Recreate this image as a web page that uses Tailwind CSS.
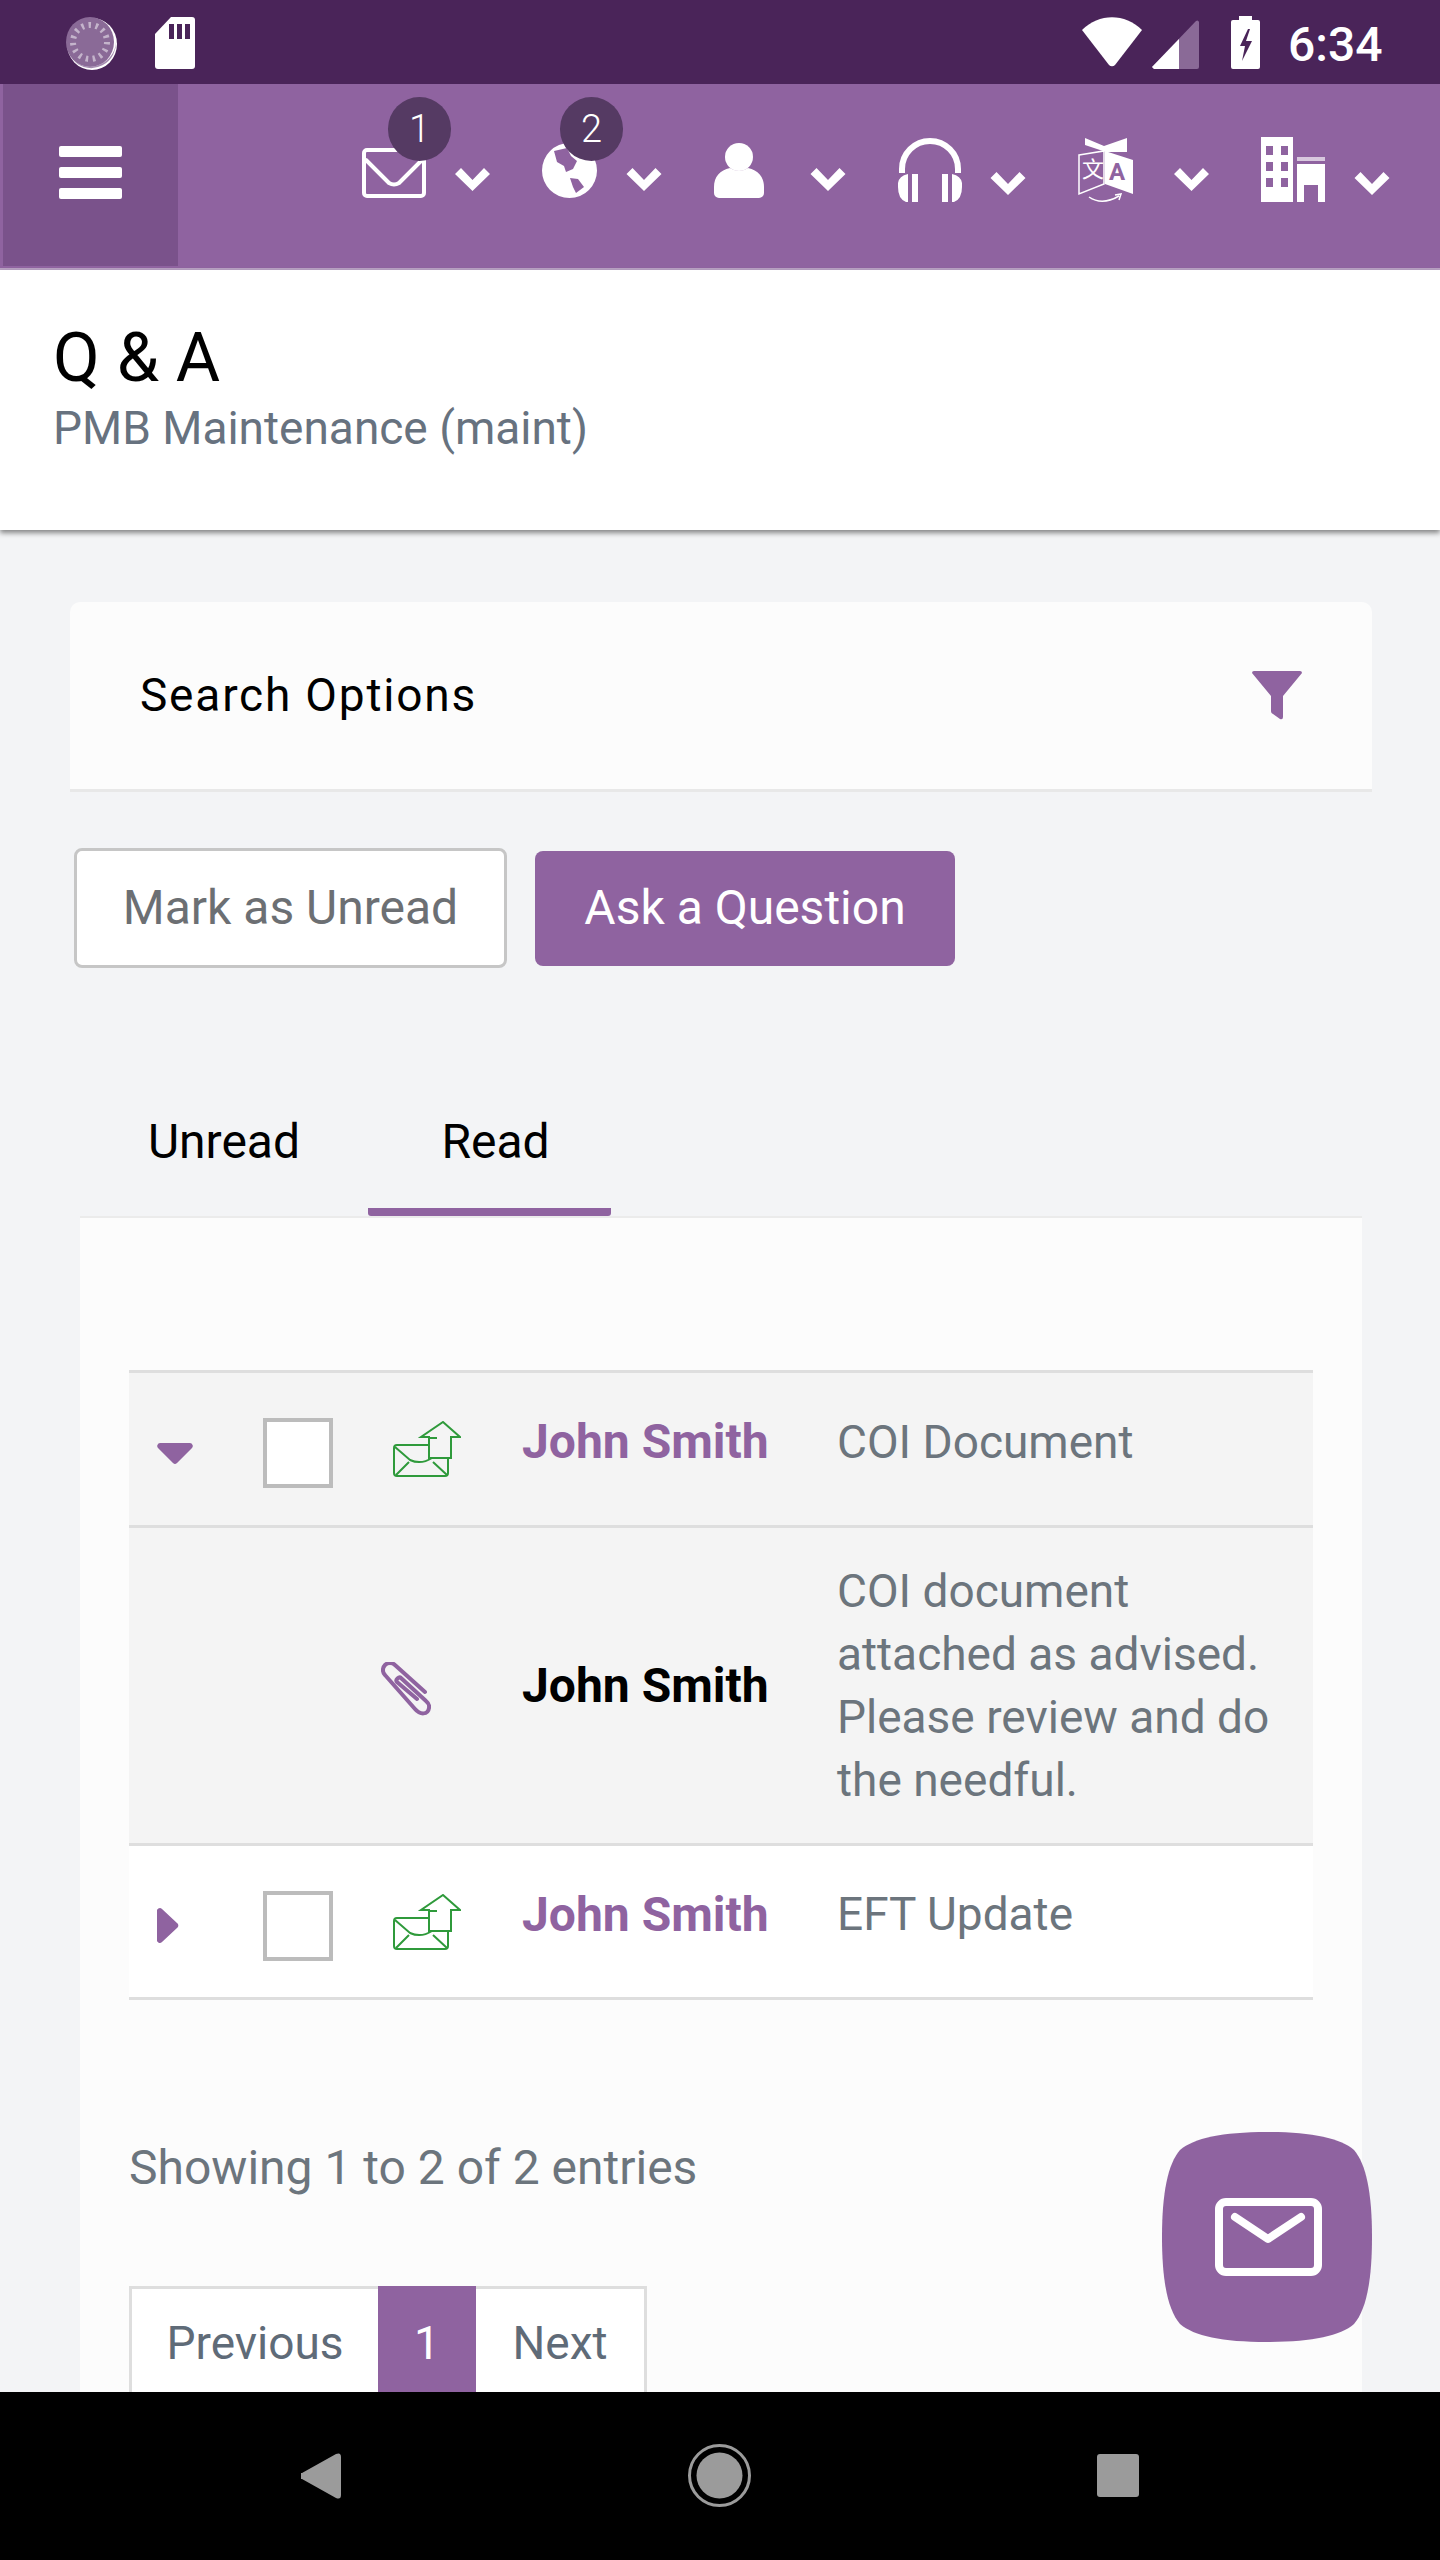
<!DOCTYPE html>
<html lang="en">
<head>
    <meta charset="UTF-8">
    <meta name="viewport" content="width=device-width, initial-scale=1.0">
    <title>Q &amp; A</title>
    <script src="https://cdn.jsdelivr.net/npm/@tailwindcss/browser@4"></script>
</head>
<body class="font-['Roboto',sans-serif]">
<div class="relative w-[1440px] h-[2560px] overflow-hidden flex flex-col bg-[#f3f4f6]">

    <!-- status bar -->
    <div class="relative h-[84px] shrink-0 bg-[#4a2459] flex items-start">
        <svg class="ml-[66px] mt-[17px]" width="51" height="53" viewBox="0 0 51 53">
            <ellipse cx="26" cy="27" rx="25" ry="26" fill="#fff"/>
            <ellipse cx="24" cy="25" rx="24" ry="25" fill="#8a6a97"/>
            <circle cx="24" cy="25" r="17" fill="none" stroke="#c4b4cb" stroke-width="6" stroke-dasharray="2.5 4.6"/>
            <path d="M8 44A25 26 0 0 0 50 22A26 26 0 0 1 8 44Z" fill="#a68db1"/>
        </svg>
        <svg class="ml-[38px] mt-[17px]" width="40" height="52" viewBox="0 0 40 52">
            <path d="M16 0H37a3 3 0 0 1 3 3V49a3 3 0 0 1-3 3H3a3 3 0 0 1-3-3V17Z" fill="#fff"/>
            <path d="M14 7h5v15h-5zM22 7h5v15h-5zM30 7h5v15h-5z" fill="#4a2459"/>
        </svg>
        <svg class="ml-[887px] mt-[17px]" width="60" height="50" viewBox="0 0 60 50">
            <path d="M0 13C17-4 43-4 60 13L33 48a4 4 0 0 1-6 0Z" fill="#fff"/>
        </svg>
        <svg class="ml-[10px] mt-[20px]" width="47" height="49" viewBox="0 0 47 49">
            <path d="M0 47 44 1a2 2 0 0 1 3 1V47a2 2 0 0 1-2 2H2Z" fill="#8a6a97"/>
            <path d="M0 47 27 19V49H2Z" fill="#fff"/>
        </svg>
        <svg class="ml-[32px] mt-[16px]" width="29" height="53" viewBox="0 0 29 53">
            <path d="M8 0H21V4H27a2 2 0 0 1 2 2V51a2 2 0 0 1-2 2H2a2 2 0 0 1-2-2V6a2 2 0 0 1 2-2H8Z" fill="#fff"/>
            <path d="M17 13 9 30h5l-3 15 10-20h-6l4-12Z" fill="#4a2459"/>
        </svg>
        <span class="ml-[28px] mt-[15px] text-[48px] leading-[60px] font-medium text-white">6:34</span>
    </div>

    <!-- purple header -->
    <div class="relative h-[186px] shrink-0 bg-[#8f63a0] border-b-2 border-[#b9a2c4] flex items-start">
        <div class="ml-[3px] w-[175px] h-[182px] bg-[#7a528b] flex items-center justify-center">
            <div class="flex flex-col gap-[10px] -mt-[6px]">
                <div class="w-[63px] h-[11px] rounded-[2px] bg-white"></div>
                <div class="w-[63px] h-[11px] rounded-[2px] bg-white"></div>
                <div class="w-[63px] h-[11px] rounded-[2px] bg-white"></div>
            </div>
        </div>

        <!-- inbox -->
        <div class="relative ml-[184px] mt-[64px]">
            <svg class="block" width="64" height="50" viewBox="0 0 64 50" fill="none" stroke="#fff" stroke-width="4" stroke-linecap="round" stroke-linejoin="round">
                <rect x="2" y="2" width="60" height="46" rx="3"/>
                <path d="M4 12 27 35q5 3 10 0L60 12"/>
            </svg>
            <span class="absolute left-[26px] -top-[51px] w-[63px] h-[64px] rounded-full bg-[#553a63] text-white text-[38px] font-light leading-[64px] text-center">1</span>
        </div>
        <svg class="ml-[29px] mt-[84px]" width="35" height="23" viewBox="0 0 35 23"><path d="M0 6 6 0 17.500 12 29 0 35 6 17.500 23Z" fill="#fff"/></svg>

        <!-- regions -->
        <div class="relative ml-[52px] mt-[59px]">
            <svg class="block" width="55" height="55" viewBox="0 0 55 55">
                <circle cx="27.500" cy="27.500" r="27.500" fill="#fff"/>
                <path d="M12 8 25 5 29 13 35 18 31 26 24 29 22 23 15 19ZM28 35 36 36 42 44 34 50 31 44Z" fill="#8f63a0"/>
            </svg>
            <span class="absolute left-[18px] -top-[46px] w-[63px] h-[64px] rounded-full bg-[#553a63] text-white text-[38px] font-light leading-[64px] text-center">2</span>
        </div>
        <svg class="ml-[29px] mt-[84px]" width="36" height="23" viewBox="0 0 35 23"><path d="M0 6 6 0 17.500 12 29 0 35 6 17.500 23Z" fill="#fff"/></svg>

        <!-- profile -->
        <svg class="ml-[52px] mt-[59px]" width="50" height="55" viewBox="0 0 50 55">
            <ellipse cx="25" cy="14" rx="14" ry="14" fill="#fff"/>
            <path d="M0 44C0 34 6 27 16 25Q25 31 34 25C44 27 50 34 50 44V50a5 5 0 0 1-5 5H5a5 5 0 0 1-5-5Z" fill="#fff"/>
        </svg>
        <svg class="ml-[46px] mt-[84px]" width="36" height="23" viewBox="0 0 35 23"><path d="M0 6 6 0 17.500 12 29 0 35 6 17.500 23Z" fill="#fff"/></svg>

        <!-- support -->
        <svg class="ml-[52px] mt-[53px]" width="64" height="65" viewBox="0 0 64 65">
            <path d="M4 36V32a28 28 0 0 1 56 0V36" fill="none" stroke="#fff" stroke-width="6"/>
            <path d="M10 37V65H8Q0 62 0 50V46Q1 39 10 37ZM14 37h6V65h-6ZM54 37V65h2Q64 62 64 50V46Q63 39 54 37ZM50 37h-6V65h6Z" fill="#fff"/>
        </svg>
        <svg class="ml-[28px] mt-[88px]" width="36" height="23" viewBox="0 0 35 23"><path d="M0 6 6 0 17.500 12 29 0 35 6 17.500 23Z" fill="#fff"/></svg>

        <!-- language -->
        <svg class="ml-[52px] mt-[54px]" width="55" height="67" viewBox="0 0 55 67">
            <path d="M7 0 26 8 49 0V14H28L7 7Z" fill="#fff"/>
            <path d="M1 17 26 13V46L1 56Z" fill="none" stroke="#fff" stroke-width="1.500"/>
            <path d="M27 13 55 22V56L27 46Z" fill="#fff"/>
            <text x="4" y="39" font-size="22" font-family="'Noto Sans CJK SC',sans-serif" fill="#fff">文</text>
            <text x="31" y="42" font-size="24" font-weight="700" font-family="Roboto,sans-serif" fill="#8f63a0">A</text>
            <path d="M11 59Q24 68 41 58M37 57 43 56 41 62" fill="none" stroke="#fff" stroke-width="1.500"/>
        </svg>
        <svg class="ml-[41px] mt-[84px]" width="35" height="23" viewBox="0 0 35 23"><path d="M0 6 6 0 17.500 12 29 0 35 6 17.500 23Z" fill="#fff"/></svg>

        <!-- building -->
        <svg class="ml-[52px] mt-[53px]" width="64" height="65" viewBox="0 0 64 65">
            <path fill-rule="evenodd" d="M0 0H32V65H0ZM5 9V18H12V9ZM20 9V18H27V9ZM5 25V34H12V25ZM20 25V34H27V25ZM5 41V50H12V41ZM20 41V50H27V41Z" fill="#fff"/>
            <path d="M36 20H64V24H36Z" fill="#d8c8de"/>
            <path fill-rule="evenodd" d="M36 27H64V65H57V48H43V65H36Z" fill="#fff"/>
        </svg>
        <svg class="ml-[29px] mt-[88px]" width="36" height="23" viewBox="0 0 35 23"><path d="M0 6 6 0 17.500 12 29 0 35 6 17.500 23Z" fill="#fff"/></svg>
    </div>

    <!-- page title -->
    <div class="relative z-10 h-[260px] shrink-0 bg-white shadow-[0_3px_5px_rgba(0,0,0,0.45)] pl-[53px] pt-[48px]">
        <h1 class="text-[68px] leading-[80px] text-black">Q &amp; A</h1>
        <p class="text-[46px] leading-[56px] mt-[2px] text-[#67727f]">PMB Maintenance (maint)</p>
    </div>

    <!-- content -->
    <div class="flex-1 min-h-0 overflow-hidden pt-[72px] pl-[70px] pr-[68px]">
        <div class="h-[190px] rounded-t-[10px] bg-[#fcfcfc] border-b-[3px] border-[#e8e8e8] flex items-center justify-between pl-[70px] pr-[70px]">
            <span class="text-[46px] tracking-[1.800px] text-black">Search Options</span>
            <svg width="50" height="50" viewBox="0 0 50 50"><path d="M0 2a2 2 0 0 1 2-2H48a2 2 0 0 1 2 2L31 25V46q0 3-3 2L21 43a3 3 0 0 1-2-3V25Z" fill="#8f63a0"/></svg>
        </div>

        <div class="flex items-center gap-[28px] mt-[56px] ml-[4px]">
            <button class="w-[433px] h-[120px] rounded-[8px] border-[3px] border-[#c6c6c6] bg-white text-[48px] text-[#6c6f73]">Mark as Unread</button>
            <button class="w-[420px] h-[115px] rounded-[8px] bg-[#8f63a0] text-[48px] text-white">Ask a Question</button>
        </div>

        <div class="flex h-[248px] items-end ml-[10px] relative">
            <div class="w-[288px] h-[136px] flex items-center justify-center pb-[12px] text-[48px] text-black">Unread</div>
            <div class="w-[243px] h-[136px] flex items-center justify-center pb-[4px] pl-[12px] text-[48px] text-black border-b-[8px] border-[#8f63a0] rounded-b-[3px]">Read</div>
        </div>

        <div class="ml-[10px] mr-[10px] h-[1200px] bg-[#fcfcfc] border-t-2 border-[#ebebeb] px-[49px] pt-[152px]">
            <div class="border-t-[3px] border-[#dedede] h-[155px] bg-[#f4f4f4] flex items-center">
                <div class="w-[134px] pl-[28px] pt-[8px]">
                    <svg class="block" width="36" height="21" viewBox="0 0 36 21"><path d="M3 0H33a3 3 0 0 1 2 5L20 20a3 3 0 0 1-4 0L1 5A3 3 0 0 1 3 0Z" fill="#8f63a0"/></svg>
                </div>
                <div class="w-[130px] pt-[8px]"><div class="w-[70px] h-[70px] border-[4px] border-[#bcbcbc] bg-white"></div></div>
                <div class="w-[129px]">
                    <svg class="block" width="68" height="56" viewBox="0 0 68 56" fill="none" stroke="#2f9a3b" stroke-width="2">
                        <path d="M36 24H4a3 3 0 0 0-3 3V52a3 3 0 0 0 3 3H52a3 3 0 0 0 3-3V38"/>
                        <path d="M2 26 17 39Q28 44 39 37M3 54 16 41M54 54 40 41"/>
                        <path d="M36 37V17H37L44 17H36L36 16 28 16 50 1 67 16H58V37H44Z"/>
                    </svg>
                </div>
                <div class="w-[315px] pb-[14px] text-[48px] font-bold text-[#8f63a0]">John Smith</div>
                <div class="flex-1 pb-[14px] text-[46px] text-[#6c757d]">COI Document</div>
            </div>
            <div class="border-t-[3px] border-[#dedede] h-[318px] bg-[#f4f4f4] flex items-center">
                <div class="w-[252px]"></div>
                <div class="w-[141px] pt-[6px]">
                    <svg class="block" width="50" height="54" viewBox="0 0 50 54" fill="none" stroke="#8f63a0" stroke-width="4" stroke-linecap="round">
                        <path d="M44 30 14 3a7 7 0 0 0-10 10L34 47c5 6 13 6 14-1 .5-3-.5-5-3-7L20 16c-2-2-6 2-4 4L36 37"/>
                    </svg>
                </div>
                <div class="w-[315px] text-[48px] font-bold text-black">John Smith</div>
                <div class="flex-1 pr-[40px] text-[46px] leading-[63px] text-[#6c757d]">COI document attached as advised. Please review and do the needful.</div>
            </div>
            <div class="border-y-[3px] border-[#dedede] h-[157px] bg-white flex items-center">
                <div class="w-[134px] pl-[28px] pt-[8px]">
                    <svg class="block" width="22" height="35" viewBox="0 0 22 35"><path d="M0 4a3 3 0 0 1 5-3L20 15a3 3 0 0 1 0 5L5 34a3 3 0 0 1-5-3Z" fill="#8f63a0"/></svg>
                </div>
                <div class="w-[130px] pt-[8px]"><div class="w-[70px] h-[70px] border-[4px] border-[#bcbcbc] bg-white"></div></div>
                <div class="w-[129px]">
                    <svg class="block" width="68" height="56" viewBox="0 0 68 56" fill="none" stroke="#2f9a3b" stroke-width="2">
                        <path d="M36 24H4a3 3 0 0 0-3 3V52a3 3 0 0 0 3 3H52a3 3 0 0 0 3-3V38"/>
                        <path d="M2 26 17 39Q28 44 39 37M3 54 16 41M54 54 40 41"/>
                        <path d="M36 37V17H37L44 17H36L36 16 28 16 50 1 67 16H58V37H44Z"/>
                    </svg>
                </div>
                <div class="w-[315px] pb-[14px] text-[48px] font-bold text-[#8f63a0]">John Smith</div>
                <div class="flex-1 pb-[14px] text-[46px] text-[#6c757d]">EFT Update</div>
            </div>

            <p class="mt-[140px] text-[48px] leading-[56px] text-[#6c757d]">Showing 1 to 2 of 2 entries</p>

            <div class="mt-[90px] flex w-[518px] h-[120px] border-[3px] border-[#dedede] bg-white text-[46px] text-[#5f6b78]">
                <div class="w-[246px] pt-[20px] text-center">Previous</div>
                <div class="w-[98px] -mt-[3px] pt-[23px] text-center bg-[#8f63a0] text-white">1</div>
                <div class="flex-1 pt-[20px] text-center">Next</div>
            </div>
        </div>
    </div>

    <!-- floating message button -->
    <div class="absolute left-[1162px] top-[2132px] z-20 w-[210px] h-[210px]">
        <svg class="block" width="210" height="210" viewBox="0 0 210 210">
            <path d="M105 0C150 0 178 6 192 18C204 32 210 60 210 105C210 150 204 178 192 192C178 204 150 210 105 210C60 210 32 204 18 192C6 178 0 150 0 105C0 60 6 32 18 18C32 6 60 0 105 0Z" fill="#8f63a0"/>
            <rect x="57" y="70" width="99" height="70" rx="7" fill="none" stroke="#fff" stroke-width="8"/>
            <path d="M73 85 106 107 139 85" fill="none" stroke="#fff" stroke-width="8" stroke-linecap="round" stroke-linejoin="round"/>
        </svg>
    </div>

    <!-- android nav bar -->
    <div class="relative z-10 h-[168px] shrink-0 bg-black flex items-start">
        <svg class="ml-[301px] mt-[61px]" width="40" height="46" viewBox="0 0 40 46"><path d="M1 20 35 1q5-2 5 3V42q0 5-5 3L1 26a3 3 0 0 1 0-6Z" fill="#9b9b9b"/></svg>
        <svg class="ml-[347px] mt-[52px]" width="63" height="63" viewBox="0 0 63 63">
            <circle cx="31.500" cy="31.500" r="30" fill="none" stroke="#9b9b9b" stroke-width="3"/>
            <circle cx="31.500" cy="31.500" r="23" fill="#9b9b9b"/>
        </svg>
        <div class="ml-[346px] mt-[62px] w-[42px] h-[43px] rounded-[3px] bg-[#9b9b9b]"></div>
    </div>
</div>
</body>
</html>
